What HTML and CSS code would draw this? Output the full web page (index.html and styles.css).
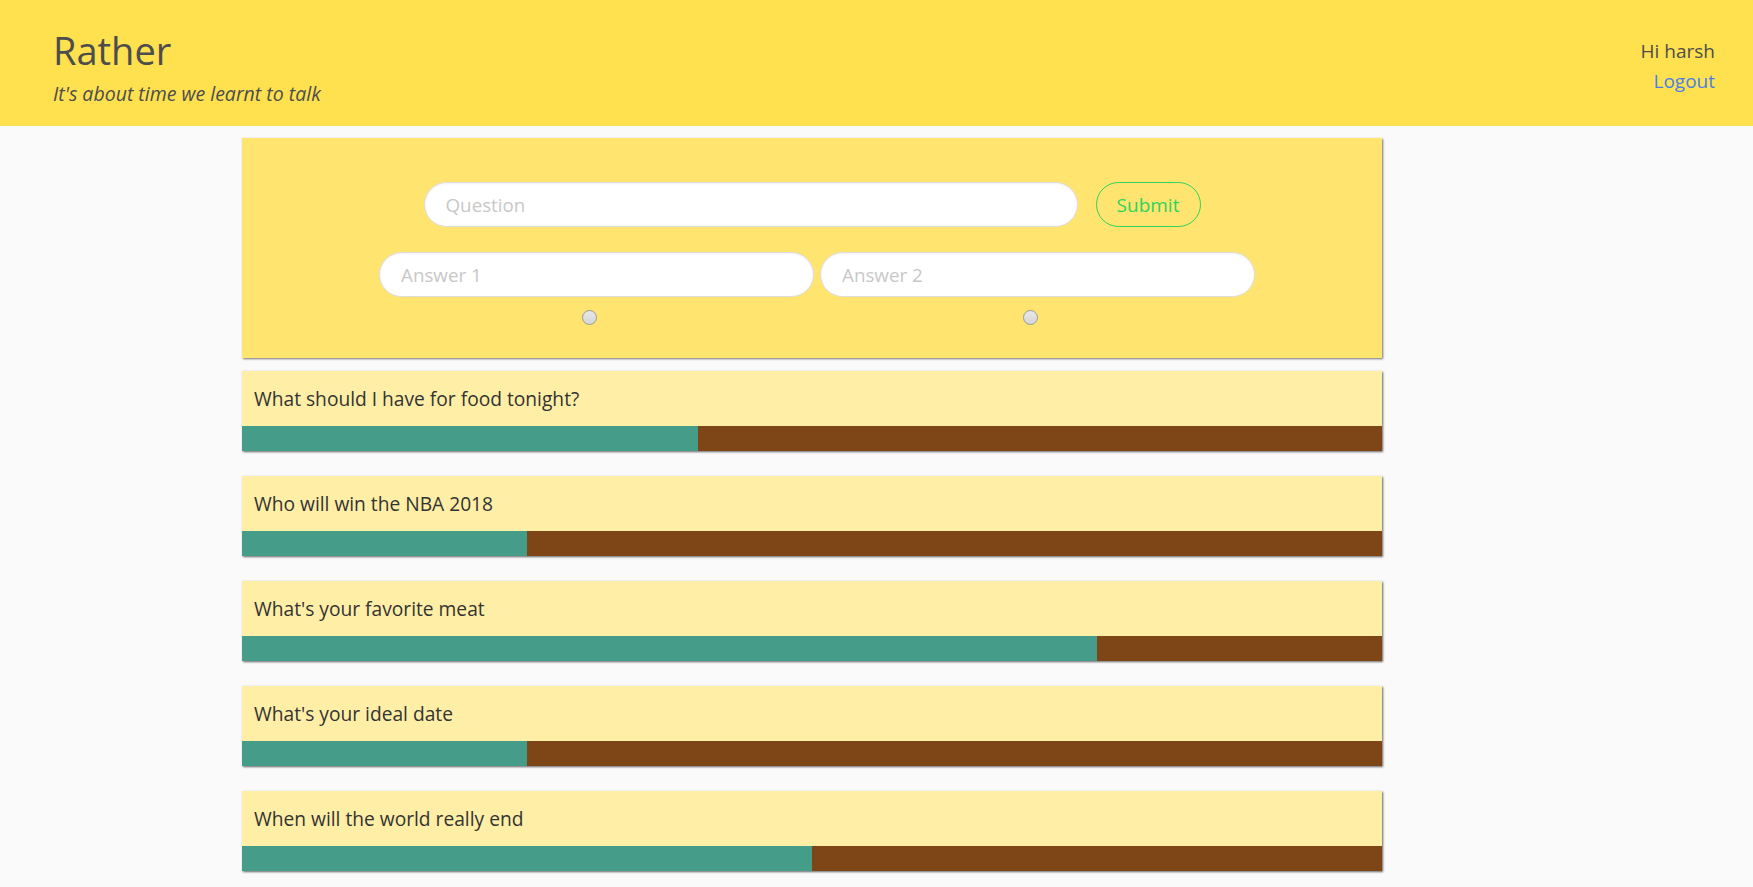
FILE: index.html
```html
<!DOCTYPE html>
<html lang="en">
<head>
<meta charset="utf-8">
<title>Rather</title>
<link rel="stylesheet" href="styles.css">
</head>
<body>
<header class="topbar">
  <div class="brand">
    <h1 class="brand-title">Rather</h1>
    <p class="brand-tagline">It's about time we learnt to talk</p>
  </div>
  <div class="user">
    <div class="user-greet">Hi harsh</div>
    <a class="user-logout" href="#">Logout</a>
  </div>
</header>
<main class="content">
  <form class="ask-card">
    <div class="ask-row">
      <input class="pill-input question-input" type="text" placeholder="Question">
      <button class="submit-btn" type="button">Submit</button>
    </div>
    <div class="answers-row">
      <div class="answer-col">
        <input class="pill-input answer-input" type="text" placeholder="Answer 1">
        <input class="radio" type="radio" name="correct">
      </div>
      <div class="answer-col">
        <input class="pill-input answer-input" type="text" placeholder="Answer 2">
        <input class="radio" type="radio" name="correct">
      </div>
    </div>
  </form>

  <section class="q-card">
    <div class="q-text">What should I have for food tonight?</div>
    <div class="q-bar"><div class="q-bar-yes" style="width:40%"></div></div>
  </section>
  <section class="q-card">
    <div class="q-text">Who will win the NBA 2018</div>
    <div class="q-bar"><div class="q-bar-yes" style="width:25%"></div></div>
  </section>
  <section class="q-card">
    <div class="q-text">What's your favorite meat</div>
    <div class="q-bar"><div class="q-bar-yes" style="width:75%"></div></div>
  </section>
  <section class="q-card">
    <div class="q-text">What's your ideal date</div>
    <div class="q-bar"><div class="q-bar-yes" style="width:25%"></div></div>
  </section>
  <section class="q-card">
    <div class="q-text">When will the world really end</div>
    <div class="q-bar"><div class="q-bar-yes" style="width:50%"></div></div>
  </section>
</main>
</body>
</html>
```
FILE: styles.css
```css
* { box-sizing: border-box; }

html, body {
  margin: 0;
  padding: 0;
}

body {
  background: #fafafa;
  font-family: "Open Sans", "Noto Sans", sans-serif;
  color: #333;
}

.topbar {
  display: flex;
  justify-content: space-between;
  align-items: flex-start;
  height: 126px;
  padding: 0 38px 0 53px;
  background: #ffe14f;
}

.brand-title {
  margin: 25px 0 0;
  font-size: 38px;
  font-weight: 400;
  line-height: 50px;
  color: #4d4d4d;
}

.brand-tagline {
  margin: 7px 0 0;
  font-size: 19.5px;
  font-style: italic;
  line-height: 24px;
  color: #4d4d4d;
}

.user {
  margin-top: 36px;
  text-align: right;
  font-size: 19px;
  line-height: 30px;
}

.user-greet {
  color: #4d4d4d;
}

.user-logout {
  color: #4a7fe6;
  text-decoration: none;
}

.content {
  width: 1140px;
  margin: 12px 0 0 242px;
  padding-bottom: 20px;
}

.ask-card {
  height: 220px;
  padding-top: 44px;
  background: #ffe570;
  box-shadow: 1px 1px 2px rgba(0, 0, 0, 0.55);
  display: flex;
  flex-direction: column;
  align-items: center;
}

.ask-row {
  display: flex;
  gap: 18px;
}

.pill-input {
  height: 45px;
  padding: 0 21px;
  border: 1px solid #dcdcdc;
  border-radius: 23px;
  background: #fff;
  font-family: inherit;
  font-size: 18.8px;
  color: #333;
  box-shadow: inset 0 1px 2px rgba(0, 0, 0, 0.05);
  outline: none;
}

.pill-input::placeholder {
  color: #c8c8c8;
}

.question-input {
  width: 654px;
}

.submit-btn {
  width: 105px;
  height: 45px;
  border: 1px solid #2dd35c;
  border-radius: 23px;
  background: transparent;
  color: #2dd35c;
  font-family: inherit;
  font-size: 19px;
  cursor: pointer;
}

.answers-row {
  display: flex;
  gap: 6px;
  margin-top: 25px;
  margin-left: 10px;
}

.answer-col {
  display: flex;
  flex-direction: column;
  align-items: center;
}

.answer-input {
  width: 435px;
}

.radio {
  appearance: none;
  -webkit-appearance: none;
  width: 15px;
  height: 15px;
  margin: 13px 14px 0 0;
  border: 1px solid #9a9a9a;
  border-radius: 50%;
  background: linear-gradient(#e8e8e8, #d6d6d6);
}

.q-card {
  margin-top: 13px;
  background: #ffeea5;
  box-shadow: 1px 1px 2px rgba(0, 0, 0, 0.6);
}

.q-card + .q-card {
  margin-top: 25px;
}

.q-text {
  height: 55px;
  padding: 15px 12px 0;
  font-size: 19.2px;
  line-height: 26px;
  color: #333;
}

.q-bar {
  height: 25px;
  background: #7e4516;
}

.q-bar-yes {
  height: 100%;
  background: #459c89;
}
```
